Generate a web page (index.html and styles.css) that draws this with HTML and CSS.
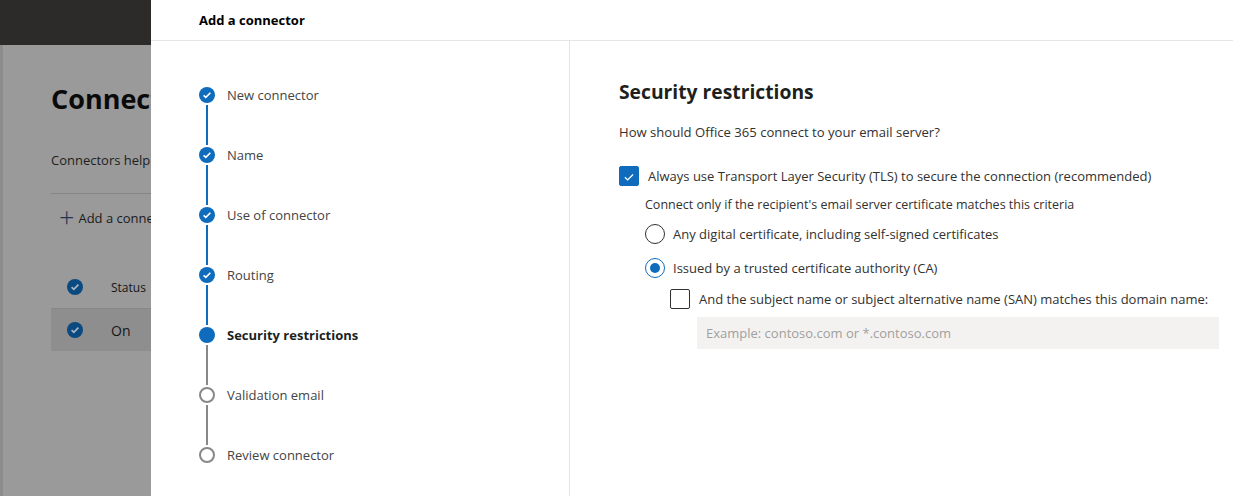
FILE: index.html
```html
<!DOCTYPE html>
<html>
<head>
<meta charset="utf-8">
<link rel="stylesheet" href="styles.css">
</head>
<body>
<div class="page">
  <div class="topbar"></div>
  <div class="content">
    <h1 class="page-title">Connectors</h1>
    <p class="page-desc">Connectors help control the flow of email messages to and from your Office 365 organization.</p>
    <div class="toolbar">
      <span class="plus">+</span><span>Add a connector</span>
    </div>
    <div class="table">
      <div class="trow head">
        <span class="tcheck"><svg viewBox="0 0 16 16" width="16" height="16"><circle cx="8" cy="8" r="8" fill="#0b4a80"/><path d="M4.6 8.2l2.2 2.1 4.6-4.6" fill="none" stroke="#a9b6c4" stroke-width="1.7"/></svg></span>
        <span class="tcell">Status</span>
      </div>
      <div class="trow sel">
        <span class="tcheck"><svg viewBox="0 0 16 16" width="16" height="16"><circle cx="8" cy="8" r="8" fill="#0b4a80"/><path d="M4.6 8.2l2.2 2.1 4.6-4.6" fill="none" stroke="#a9b6c4" stroke-width="1.7"/></svg></span>
        <span class="tcell big">On</span>
      </div>
    </div>
  </div>

  <div class="panel">
    <div class="panel-header">Add a connector</div>
    <div class="panel-body">
      <nav class="steps">
        <div class="step done">
          <div class="rail"><span class="dot"><svg viewBox="0 0 16 16" width="16" height="16"><path d="M4.6 8.3l2.2 2.1 4.6-4.6" fill="none" stroke="#fff" stroke-width="1.6"/></svg></span><span class="line"></span></div>
          <span class="label">New connector</span>
        </div>
        <div class="step done">
          <div class="rail"><span class="dot"><svg viewBox="0 0 16 16" width="16" height="16"><path d="M4.6 8.3l2.2 2.1 4.6-4.6" fill="none" stroke="#fff" stroke-width="1.6"/></svg></span><span class="line"></span></div>
          <span class="label">Name</span>
        </div>
        <div class="step done">
          <div class="rail"><span class="dot"><svg viewBox="0 0 16 16" width="16" height="16"><path d="M4.6 8.3l2.2 2.1 4.6-4.6" fill="none" stroke="#fff" stroke-width="1.6"/></svg></span><span class="line"></span></div>
          <span class="label">Use of connector</span>
        </div>
        <div class="step done">
          <div class="rail"><span class="dot"><svg viewBox="0 0 16 16" width="16" height="16"><path d="M4.6 8.3l2.2 2.1 4.6-4.6" fill="none" stroke="#fff" stroke-width="1.6"/></svg></span><span class="line"></span></div>
          <span class="label">Routing</span>
        </div>
        <div class="step current">
          <div class="rail"><span class="dot"></span><span class="line"></span></div>
          <span class="label">Security restrictions</span>
        </div>
        <div class="step todo">
          <div class="rail"><span class="dot"></span><span class="line"></span></div>
          <span class="label">Validation email</span>
        </div>
        <div class="step todo last">
          <div class="rail"><span class="dot"></span></div>
          <span class="label">Review connector</span>
        </div>
      </nav>
      <main class="form">
        <h2 class="form-title">Security restrictions</h2>
        <p class="form-q">How should Office 365 connect to your email server?</p>
        <label class="opt main-opt">
          <span class="cbox checked"><svg viewBox="0 0 20 20" width="20" height="20"><path d="M5.5 10.2l3 3 6-6" fill="none" stroke="#fff" stroke-width="1.4"/></svg></span>
          <span>Always use Transport Layer Security (TLS) to secure the connection (recommended)</span>
        </label>
        <div class="sub">
          <p class="sub-note">Connect only if the recipient's email server certificate matches this criteria</p>
          <label class="opt radio-opt">
            <span class="radio"></span>
            <span>Any digital certificate, including self-signed certificates</span>
          </label>
          <label class="opt radio-opt">
            <span class="radio on"><span class="radio-dot"></span></span>
            <span>Issued by a trusted certificate authority (CA)</span>
          </label>
          <div class="sub2">
            <label class="opt san-opt">
              <span class="cbox"></span>
              <span>And the subject name or subject alternative name (SAN) matches this domain name:</span>
            </label>
            <div class="input">Example: contoso.com or *.contoso.com</div>
          </div>
        </div>
      </main>
    </div>
  </div>
</div>
</body>
</html>
```

FILE: styles.css
```css
* { box-sizing: border-box; }
html, body { margin: 0; padding: 0; }
body {
  width: 1233px;
  height: 496px;
  overflow: hidden;
  font-family: "Open Sans", "Noto Sans", "Liberation Sans", sans-serif;
  color: #323130;
}
.page {
  position: relative;
  width: 1233px;
  height: 496px;
  background: #9a9a9a;
}
.topbar {
  height: 45px;
  background: #2c2b2a;
}
.content {
  width: 151px;
  height: 451px;
  overflow: hidden;
  border-left: 3px solid #8c8c8c;
  padding: 36px 0 0 48px;
  color: #0a0a0a;
}
.page-title {
  margin: 0;
  font-size: 27px;
  font-weight: 700;
  line-height: 36px;
  white-space: nowrap;
}
.page-desc {
  margin: 34px 0 0;
  font-size: 13px;
  line-height: 18px;
  white-space: nowrap;
  color: #1e1e1e;
}
.toolbar {
  margin-top: 24px;
  border-top: 1px solid #858585;
  padding: 0 0 0 8px;
  display: flex;
  align-items: center;
  font-size: 13px;
  white-space: nowrap;
  color: #1a1a1a;
  height: 48px;
}
.plus {
  font-size: 27px;
  font-weight: 300;
  color: #1f3552;
  line-height: 20px;
  margin-right: 4px;
  position: relative;
  top: -1px;
}
.table { margin-top: 25px; }
.trow {
  display: flex;
  align-items: center;
  height: 43px;
  white-space: nowrap;
}
.trow.head { border-bottom: 1px solid #888; }
.trow.sel { background: #8e8e8e; height: 42px; }
.tcheck { width: 60px; padding-left: 16px; display: flex; }
.tcell { font-size: 12px; color: #161616; }
.tcell.big { font-size: 14px; }

.panel {
  position: absolute;
  left: 151px;
  top: 0;
  right: 0;
  bottom: 0;
  background: #fff;
  display: flex;
  flex-direction: column;
}
.panel-header {
  height: 43px;
  border-bottom: 1px solid #e5e5e5;
  padding-left: 48px;
  font-size: 13px;
  font-weight: 700;
  line-height: 40px;
  color: #000;
}
.panel-body {
  flex: 1;
  display: flex;
}
.steps {
  width: 419px;
  border-right: 1px solid #e5e5e5;
  padding: 46px 0 0 48px;
}
.step {
  display: flex;
  align-items: flex-start;
  height: 60px;
}
.rail {
  display: flex;
  flex-direction: column;
  align-items: center;
  width: 16px;
}
.dot {
  width: 16px;
  height: 16px;
  border-radius: 50%;
  display: flex;
}
.line {
  width: 2px;
  height: 40px;
  margin-top: 2px;
}
.step.done .dot, .step.current .dot { background: #0f6cbd; }
.step.done .line { background: #0f6cbd; }
.step.current .line, .step.todo .line { background: #8a8886; }
.step.todo .dot { border: 2px solid #8a8886; background: #fff; }
.label {
  margin-left: 12px;
  font-size: 13px;
  line-height: 16px;
  color: #444;
  white-space: nowrap;
}
.step.current .label { font-weight: 700; color: #201f1e; }

.form {
  flex: 1;
  padding: 37px 0 0 49px;
  white-space: nowrap;
}
.form-title {
  margin: 0;
  font-size: 19.3px;
  font-weight: 700;
  line-height: 28px;
  color: #201f1e;
}
.form-q {
  margin: 17px 0 0;
  font-size: 13.1px;
  line-height: 18px;
  color: #323130;
}
.opt {
  display: flex;
  align-items: center;
  font-size: 13px;
  color: #323130;
}
.main-opt { margin-top: 25px; height: 20px; }
.cbox {
  width: 20px;
  height: 20px;
  border: 1px solid #323130;
  border-radius: 2px;
  margin-right: 9px;
  flex: none;
  display: flex;
}
.cbox.checked { background: #0f6cbd; border-color: #0f6cbd; }
.sub { padding-left: 26px; }
.sub-note { margin: 10px 0 0; font-size: 12.5px; line-height: 18px; }
.radio-opt { margin-top: 9px; height: 22px; }
.radio-opt + .radio-opt { margin-top: 12px; }
.radio {
  width: 20px;
  height: 20px;
  border: 1px solid #323130;
  border-radius: 50%;
  margin-right: 8px;
  flex: none;
  display: flex;
  align-items: center;
  justify-content: center;
}
.radio.on { border-color: #0f6cbd; }
.radio-dot { width: 10px; height: 10px; border-radius: 50%; background: #0f6cbd; }
.sub2 { padding-left: 25px; }
.san-opt { margin-top: 9px; height: 21px; }
.input {
  margin: 8px 0 0 27px;
  width: 522px;
  height: 32px;
  background: #f3f2f1;
  color: #a19f9d;
  font-size: 13px;
  line-height: 32px;
  padding-left: 9px;
}
```
